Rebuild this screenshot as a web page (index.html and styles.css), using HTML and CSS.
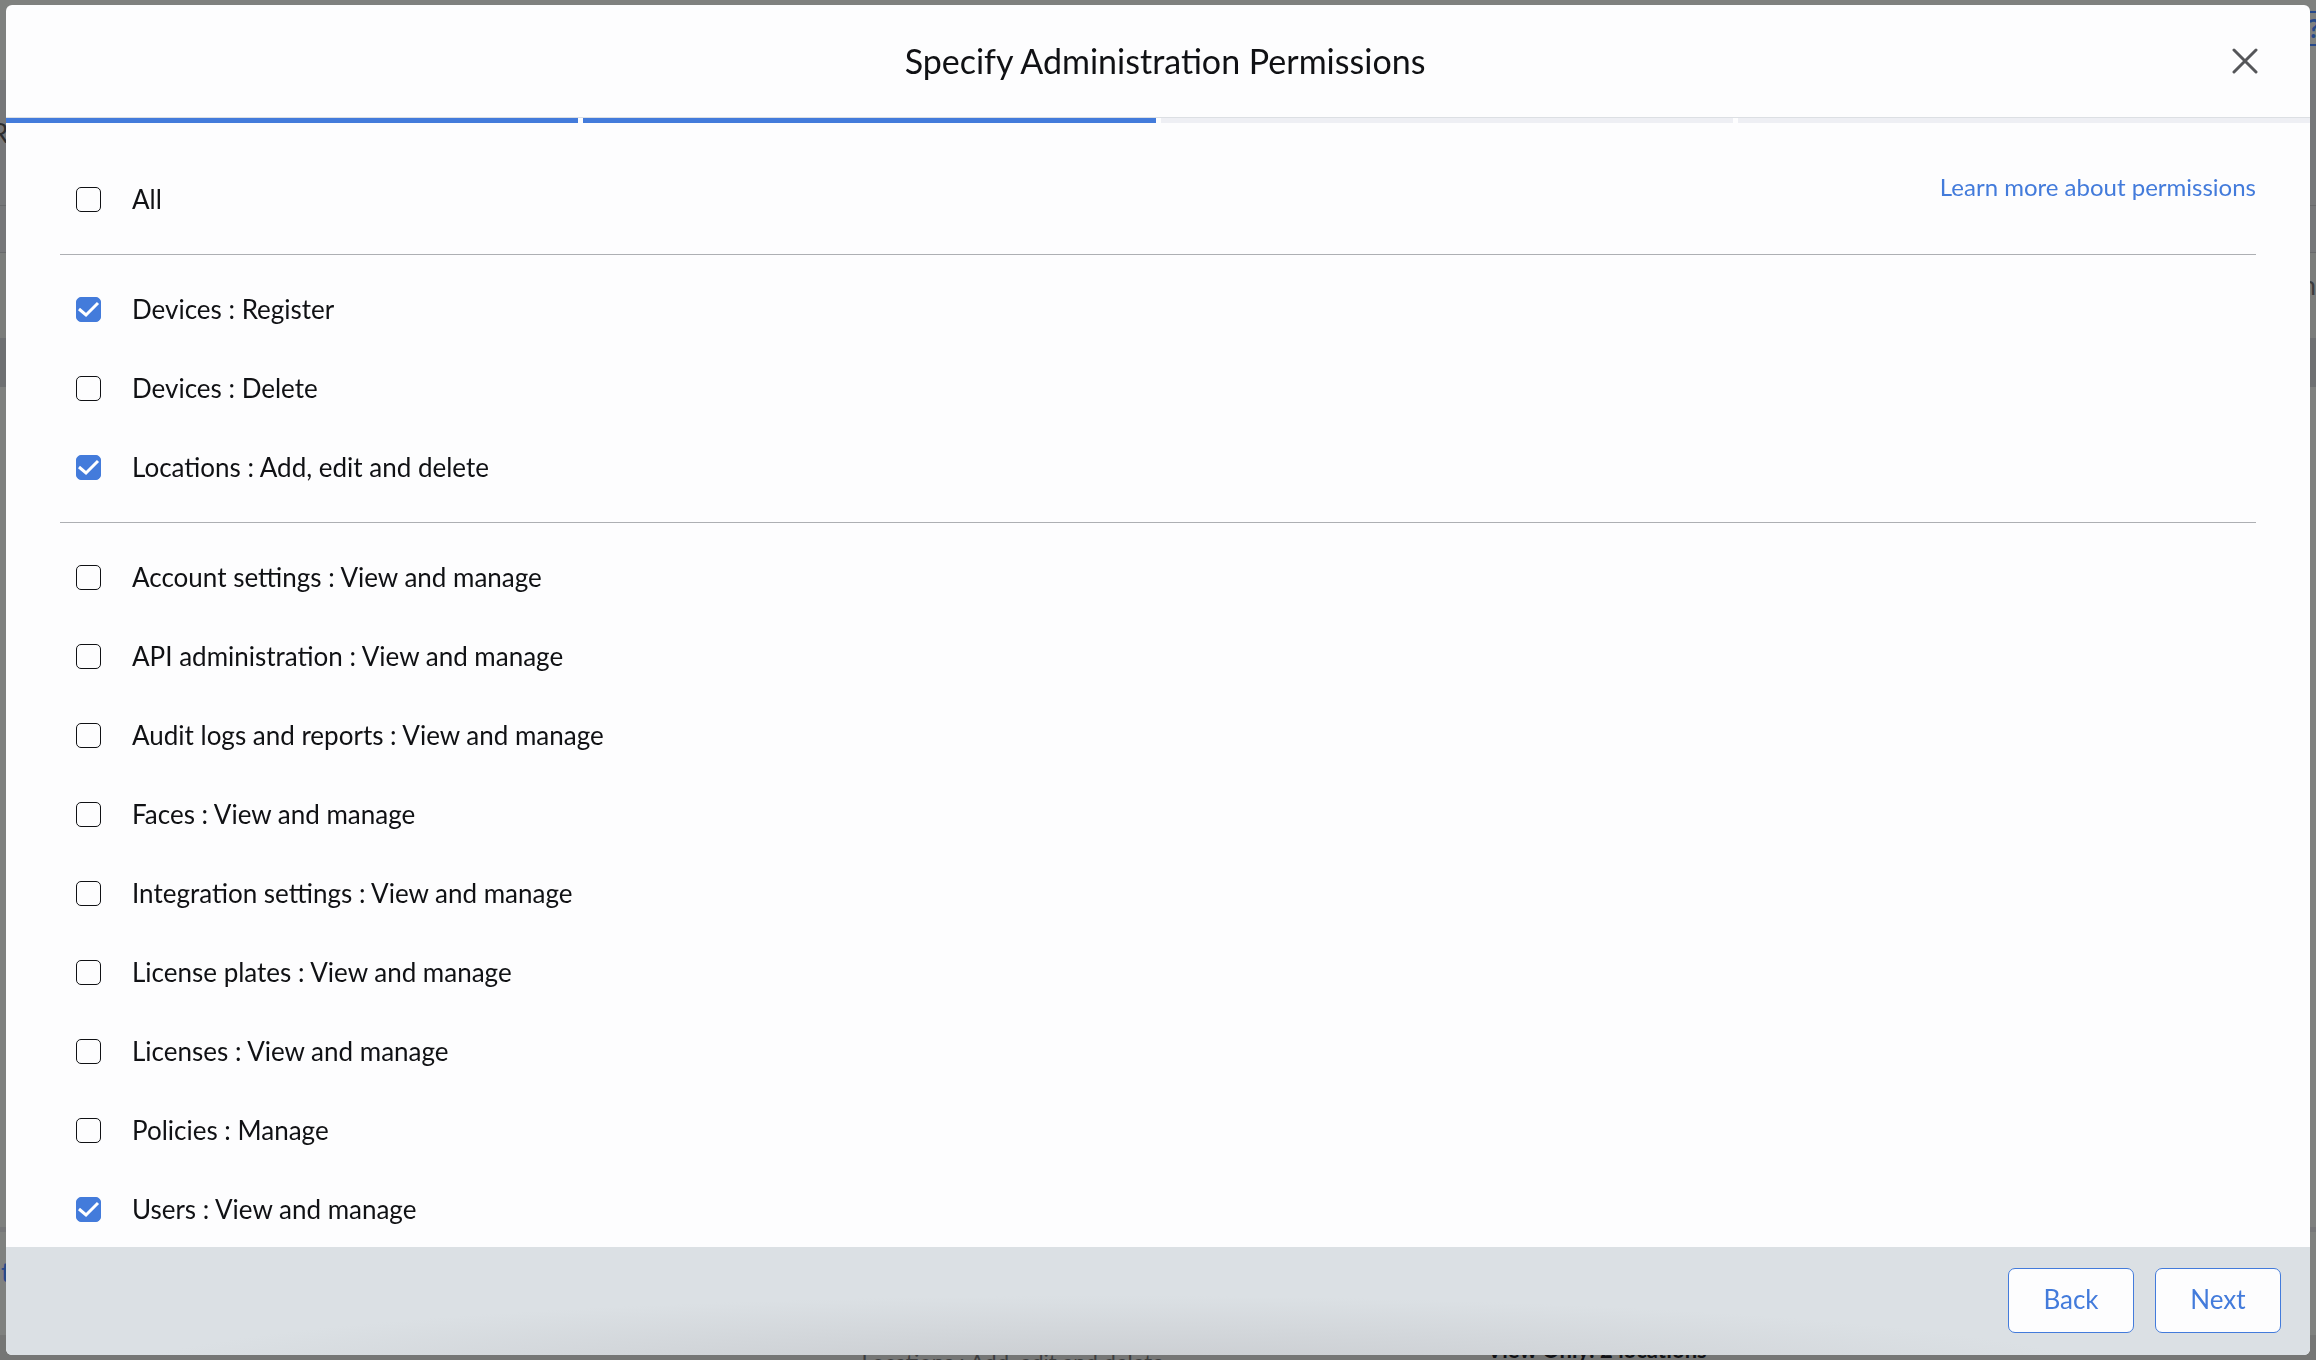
FILE: index.html
```
<!DOCTYPE html>
<html lang="en">
<head>
    <meta charset="UTF-8">
    <title>Specify Administration Permissions</title>
    <link rel="stylesheet" href="styles.css">
</head>
<body>
<!-- page under the dialog -->
<div class="page" aria-hidden="true">
    <div class="page-top"><span class="page-help">?</span></div>
    <div class="page-title"><span>R</span></div>
    <div class="page-tabs"></div>
    <div class="page-row"><span>n</span></div>
    <div class="page-head"></div>
    <div class="page-list"></div>
    <div class="page-foot"><a href="#" class="page-link" tabindex="-1">t</a></div>
    <div class="page-summary">
        <span class="summary-name">Locations : Add, edit and delete</span>
        <span class="summary-value">View Only: 2 locations</span>
    </div>
</div>

<div class="overlay">
    <form class="modal" role="dialog" aria-labelledby="title">
        <header class="modal-header">
            <h1 id="title">Specify Administration Permissions</h1>
            <button type="button" class="close" aria-label="Close">
                <svg width="26" height="26" viewBox="0 0 26 26">
                    <path d="M2 2L24 24M24 2L2 24" fill="none" stroke="#555659" stroke-width="3" stroke-linecap="round"/>
                </svg>
            </button>
        </header>
        <div class="steps">
            <div class="step done"></div>
            <div class="step done"></div>
            <div class="step"></div>
            <div class="step"></div>
        </div>
        <div class="modal-body">
            <div class="group group-all">
                <label class="item"><input type="checkbox"><span>All</span></label>
                <a href="#" class="learn">Learn more about permissions</a>
            </div>
            <div class="group">
                <label class="item"><input type="checkbox" checked><span>Devices : Register</span></label>
                <label class="item"><input type="checkbox"><span>Devices : Delete</span></label>
                <label class="item"><input type="checkbox" checked><span>Locations : Add, edit and delete</span></label>
            </div>
            <div class="group">
                <label class="item"><input type="checkbox"><span>Account settings : View and manage</span></label>
                <label class="item"><input type="checkbox"><span>API administration : View and manage</span></label>
                <label class="item"><input type="checkbox"><span>Audit logs and reports : View and manage</span></label>
                <label class="item"><input type="checkbox"><span>Faces : View and manage</span></label>
                <label class="item"><input type="checkbox"><span>Integration settings : View and manage</span></label>
                <label class="item"><input type="checkbox"><span>License plates : View and manage</span></label>
                <label class="item"><input type="checkbox"><span>Licenses : View and manage</span></label>
                <label class="item"><input type="checkbox"><span>Policies : Manage</span></label>
                <label class="item"><input type="checkbox" checked><span>Users : View and manage</span></label>
            </div>
        </div>
        <footer class="modal-footer">
            <button type="button" class="btn">Back</button>
            <button type="button" class="btn">Next</button>
        </footer>
    </form>
</div>
</body>
</html>
```
FILE: styles.css
```
* {
    box-sizing: border-box;
}

body {
    margin: 0;
    height: 100vh;
    overflow: hidden;
    font-family: Lato, "Open Sans", sans-serif;
    font-size: 26px;
    color: #101114;
    background: #7f817f;
}

/* page under the dialog */
.page {
    display: flex;
    flex-direction: column;
    height: 100vh;
    overflow: hidden;
}

.page-top {
    display: flex;
    justify-content: flex-end;
    height: 80px;
    padding-top: 11px;
}

.page-help {
    width: 8px;
    height: 35px;
    border: solid #26498a;
    border-width: 2px 0;
    font-weight: bold;
    line-height: 31px;
    color: #26498a;
}

.page-title {
    height: 125px;
    padding-top: 37px;
    background: #767779;
    color: #2c2d2f;
}

.page-title span {
    display: block;
    margin-left: -8px;
}

.page-tabs {
    height: 47px;
    background: #767779;
    border-top: 1px solid #68696b;
}

.page-row {
    display: flex;
    justify-content: flex-end;
    height: 86px;
    padding-top: 16px;
    background: #7b7d7b;
    border-top: 1px solid #68696b;
    color: #3b3c3e;
}

.page-head {
    height: 49px;
    background: #6e7072;
}

.page-list {
    flex: 1;
}

.page-foot {
    height: 108px;
    padding: 24px 1px 0;
    border-top: 5px solid #767779;
}

.page-link {
    color: #26498a;
    text-decoration: none;
}

.page-summary {
    display: grid;
    grid-template-columns: 43% 1fr;
    align-items: start;
    height: 25px;
    padding-left: 37.2%;
    background: #757675;
    font-size: 22px;
    line-height: 22px;
    white-space: nowrap;
}

.summary-name {
    padding-top: 16px;
    color: #3c3d3e;
}

.summary-value {
    padding-top: 4px;
    font-weight: bold;
}

/* dialog */
.overlay {
    position: fixed;
    inset: 0;
    display: flex;
    padding: 5px 6px;
}

.modal {
    display: flex;
    flex: 1;
    flex-direction: column;
    overflow: hidden;
    background: #fdfdfe;
    border-radius: 6px;
}

.modal-header {
    display: grid;
    grid-template-columns: 1fr auto 1fr;
    align-items: center;
    height: 113px;
    padding: 0 52px 1px 66px;
    border-bottom: 1px solid #dcdfe3;
}

.modal-header h1 {
    grid-column: 2;
    margin: 0;
    font-size: 34px;
    font-weight: normal;
}

.close {
    justify-self: end;
    display: flex;
    padding: 0;
    border: 0;
    background: none;
}

.steps {
    display: flex;
    gap: 5px;
}

.step {
    flex: 1;
    height: 5px;
    background: #eeeff4;
}

.step.done {
    background: #437bdb;
}

.modal-body {
    flex: 1;
    min-height: 0;
    padding: 22px 54px 0;
    overflow-y: auto;
    scrollbar-width: none;
}

.group {
    padding: 15px 16px;
    border-bottom: 1px solid #adafb3;
}

.group:last-child {
    border-bottom: 0;
}

.group-all {
    display: flex;
    justify-content: space-between;
    padding-right: 0;
}

.item {
    display: flex;
    align-items: center;
    gap: 31px;
    height: 79px;
}

.item span {
    padding-bottom: 2px;
}

.item input {
    appearance: none;
    width: 25px;
    height: 25px;
    margin: 0;
    border: 1px solid #101114;
    border-radius: 5px;
}

.item input:checked {
    border-color: #437bdb;
    background: #437bdb url("data:image/svg+xml,%3Csvg xmlns='http://www.w3.org/2000/svg' viewBox='0 0 25 25'%3E%3Cpath d='M3 12L10 18L22 6' fill='none' stroke='white' stroke-width='3'/%3E%3C/svg%3E") center / 25px 25px no-repeat;
}

.learn {
    padding-top: 12px;
    font-size: 24px;
    color: #437bdb;
    text-decoration: none;
}

.modal-footer {
    display: flex;
    align-items: center;
    justify-content: flex-end;
    gap: 21px;
    height: 108px;
    padding: 0 29px 2px 0;
    background: radial-gradient(ellipse 44% 80% at 48% 125%, #cacdd1 20%, #dbe0e4);
}

.btn {
    width: 126px;
    height: 65px;
    padding-bottom: 3px;
    border: 1px solid #437bdb;
    border-radius: 7px;
    background: #fdfdfe;
    font: inherit;
    color: #437bdb;
}
```
